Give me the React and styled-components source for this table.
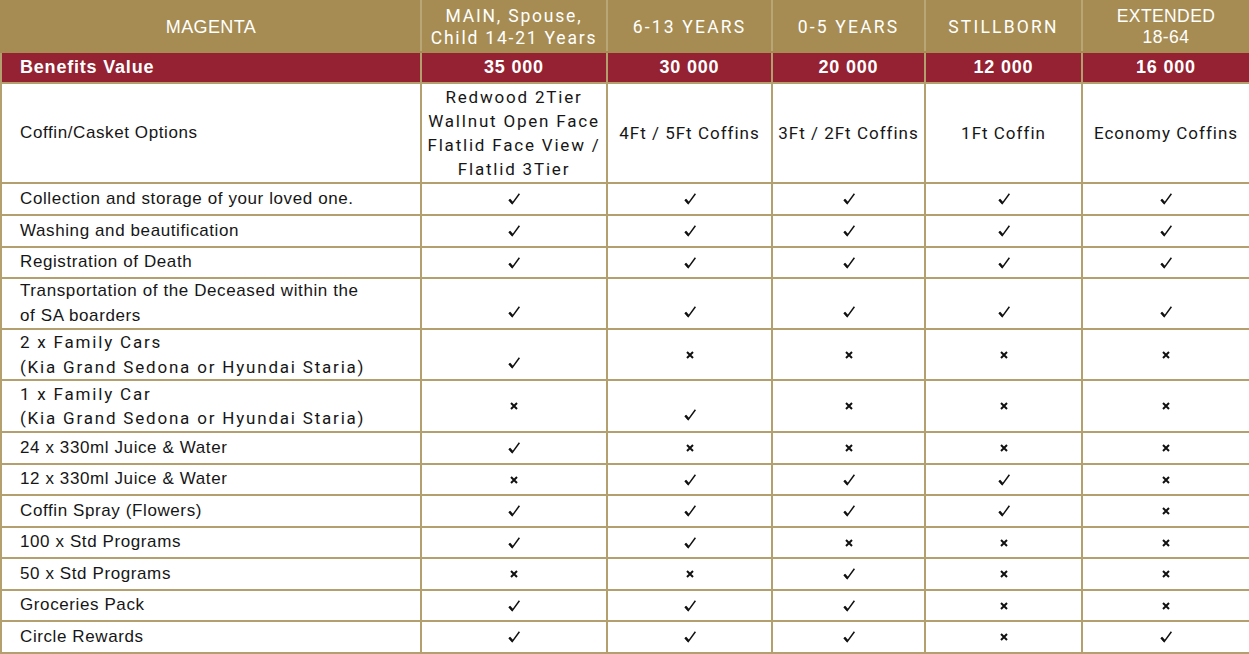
import React from "react";
import styled, { createGlobalStyle } from "styled-components";

const GOLD = "#a68c52";
const LINE = "#b3a06e";
const RED = "#952232";

const Global = createGlobalStyle`
    html, body { margin: 0; padding: 0; background: #fff; }
    body { font-family: "Liberation Sans", Arial, sans-serif; }
`;

// Y = tick, N = cross; a trailing "b" drops the mark to the lower line
const rows = [
    { label: "Collection and storage of your loved one.", h: 32, cells: ["Y", "Y", "Y", "Y", "Y"] },
    { label: "Washing and beautification", h: 32, cells: ["Y", "Y", "Y", "Y", "Y"] },
    { label: "Registration of Death", h: 31, cells: ["Y", "Y", "Y", "Y", "Y"] },
    { label: ["Transportation of the Deceased within the", "of SA boarders"], h: 51, cells: ["Yb", "Yb", "Yb", "Yb", "Yb"] },
    { label: ["2 x Family Cars", "(Kia Grand Sedona or Hyundai Staria)"], spaced: true, h: 51, cells: ["Yb", "N", "N", "N", "N"] },
    { label: ["1 x Family Car", "(Kia Grand Sedona or Hyundai Staria)"], spaced: true, h: 52, cells: ["N", "Yb", "N", "N", "N"] },
    { label: "24 x 330ml Juice & Water", h: 32, cells: ["Y", "N", "N", "N", "N"] },
    { label: "12 x 330ml Juice & Water", h: 31, cells: ["N", "Y", "Y", "Y", "N"] },
    { label: "Coffin Spray (Flowers)", h: 32, cells: ["Y", "Y", "Y", "Y", "N"] },
    { label: "100 x Std Programs", h: 31, cells: ["Y", "Y", "N", "N", "N"] },
    { label: "50 x Std Programs", h: 32, cells: ["N", "N", "Y", "N", "N"] },
    { label: "Groceries Pack", h: 31, cells: ["Y", "Y", "Y", "N", "N"] },
    { label: "Circle Rewards", h: 32, cells: ["Y", "Y", "Y", "N", "Y"] },
];

const Tick = () => (
    <svg width="12" height="12" viewBox="0 0 12 12">
        <path d="M1 6.8 L4.2 10.6 L11.4 0.8" fill="none" stroke="#111" strokeWidth="1.5" strokeLinejoin="round" />
        <path d="M1.4 6.6 L4.4 9.8" stroke="#111" strokeWidth="2.2" />
    </svg>
);

const Cross = () => (
    <svg width="8" height="8" viewBox="0 0 8 8">
        <path d="M1 1 L7 7 M7 1 L1 7" stroke="#111" strokeWidth="2" />
    </svg>
);

const App = () => (
    <Page>
        <Global />
        <Table>
            <colgroup>
                <col style={{ width: 420 }} />
                <col style={{ width: 186 }} />
                <col style={{ width: 165 }} />
                <col style={{ width: 153 }} />
                <col style={{ width: 157 }} />
                <col style={{ width: 168 }} />
            </colgroup>
            <tbody>
                <Row h={51}>
                    <Head>MAGENTA</Head>
                    <Head spaced>MAIN, Spouse,<br />Child 14-21 Years</Head>
                    <Head wide>6-13 YEARS</Head>
                    <Head wide>0-5 YEARS</Head>
                    <Head wide>STILLBORN</Head>
                    <Head small>EXTENDED<br />18-64</Head>
                </Row>
                <Row h={31}>
                    <Value left>Benefits Value</Value>
                    <Value>35 000</Value>
                    <Value>30 000</Value>
                    <Value>20 000</Value>
                    <Value>12 000</Value>
                    <Value>16 000</Value>
                </Row>
                <Row h={100}>
                    <Label>Coffin/Casket Options</Label>
                    <Option wide>Redwood 2Tier<br />Wallnut Open Face<br />Flatlid Face View /<br />Flatlid 3Tier</Option>
                    <Option>4Ft / 5Ft Coffins</Option>
                    <Option>3Ft / 2Ft Coffins</Option>
                    <Option>1Ft Coffin</Option>
                    <Option>Economy Coffins</Option>
                </Row>
                {rows.map((r, i) => (
                    <Row key={i} h={r.h}>
                        <Label spaced={r.spaced}>
                            {Array.isArray(r.label)
                                ? r.label.map((l, j) => <Line key={j}>{l}</Line>)
                                : r.label}
                        </Label>
                        {r.cells.map((c, j) => (
                            <Mark key={j} pos={c[1] || "m"}>
                                {c[0] === "Y" ? <Tick /> : <Cross />}
                            </Mark>
                        ))}
                    </Row>
                ))}
            </tbody>
        </Table>
    </Page>
);

// Styled Components
const Page = styled.div`
    width: 1249px;
    overflow: hidden;
`;

const Table = styled.table`
    width: 1249px;
    table-layout: fixed;
    border-collapse: collapse;
    border: 2px solid ${LINE};
`;

const Row = styled.tr`
    height: ${p => p.h}px;
`;

const Cell = styled.td`
    border: 2px solid ${LINE};
    padding: 0;
    box-sizing: border-box;
    text-align: center;
    vertical-align: middle;
    color: #161616;
`;

const Head = styled(Cell)`
    background: ${GOLD};
    border-color: ${GOLD};
    border-right-color: #b8a676;
    color: #fff;
    font-family: ${p => (p.spaced || p.wide ? "Roboto" : "\"Liberation Sans\"")}, Arial, sans-serif;
    font-size: ${p => (p.small ? 17.5 : p.spaced || p.wide ? 17.5 : 18)}px;
    letter-spacing: ${p => (p.wide ? 2.2 : p.spaced ? 1.8 : 0.4)}px;
    line-height: ${p => (p.small ? 21 : 22)}px;
`;

const Value = styled(Cell)`
    background: ${RED};
    border-color: ${LINE};
    border-top-color: ${GOLD};
    color: #fff;
    font-weight: 700;
    font-size: 18px;
    text-align: ${p => (p.left ? "left" : "center")};
    padding-left: ${p => (p.left ? 18 : 0)}px;
    letter-spacing: 0.8px;
`;

const Label = styled(Cell)`
    text-align: left;
    padding-left: 18px;
    font-family: ${p => (p.spaced ? "Roboto, Arial" : "\"Liberation Sans\", Arial")}, sans-serif;
    font-size: 17px;
    letter-spacing: ${p => (p.spaced ? 1.8 : 0.6)}px;
    line-height: 24.5px;
`;

const Line = styled.div`
    white-space: nowrap;
`;

const Option = styled(Cell)`
    font-family: Roboto, Arial, sans-serif;
    font-size: 17px;
    letter-spacing: ${p => (p.wide ? 1.8 : 1)}px;
    line-height: 24px;
    white-space: nowrap;
`;

const Mark = styled(Cell)`
    line-height: 0;
    vertical-align: ${p => (p.pos === "b" ? "bottom" : "middle")};
    padding-bottom: ${p => (p.pos === "b" ? 10 : 0)}px;
`;

export default App;
